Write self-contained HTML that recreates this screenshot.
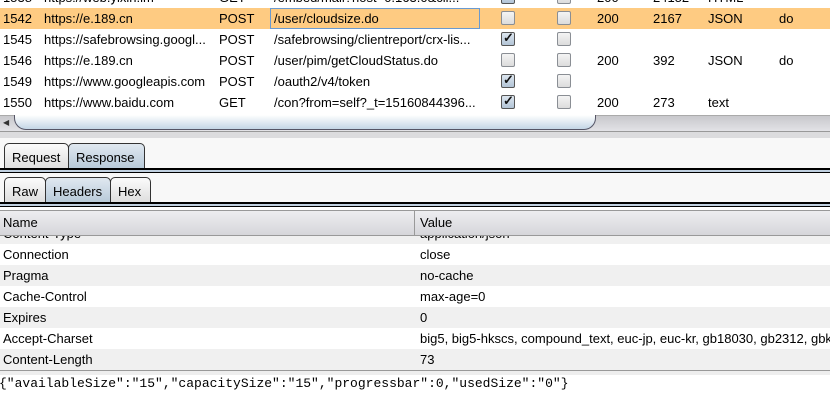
<!DOCTYPE html>
<html><head><meta charset="utf-8"><style>
body{margin:0;width:830px;height:401px;overflow:hidden;background:#fff;font-family:"Liberation Sans",sans-serif;font-size:13px;color:#000;position:relative}
.a{position:absolute;white-space:nowrap}
.row{position:absolute;left:0;width:830px;height:21px}
.row span{position:absolute;top:3px}
.cb{position:absolute;width:12px;height:12px;border:1px solid #8a8e94;border-radius:2px;background:linear-gradient(#f4f4f4,#dcdcdc);top:3px}
.cb.c{background:linear-gradient(#dde6ef,#b2c4d6);border-color:#555}
.cb.c::after{content:"✓";position:absolute;left:1px;top:-3px;font-size:13px;font-weight:bold;color:#111}
.tab{position:absolute;height:25px;border:1px solid #333;border-bottom:none;border-radius:5px 5px 0 0;background:linear-gradient(#fbfbfb,#dedede);box-sizing:border-box;padding:6px 0 0 7px}
.tab.s{background:linear-gradient(#e0e8f0,#b8cad9)}
.hr{position:absolute;left:0;width:830px;height:21px}
.hr span{position:absolute;top:3px}
</style></head><body>
<div class="row" style="top:-13px"><span style="left:3px">1538</span><span style="left:44px">https://web.yixin.im</span><span style="left:219px">GET</span><span style="left:274px">/embed/mail?host=0.163.0&amp;cli...</span><div class="cb c" style="left:501px"></div><div class="cb" style="left:557px"></div><span style="left:597px">200</span><span style="left:653px">24152</span><span style="left:708px">HTML</span></div>
<div class="row" style="top:8px;background:#fecb82"><span style="left:3px">1542</span><span style="left:44px">https://e.189.cn</span><span style="left:219px">POST</span><div class="a" style="left:270px;top:0;width:208px;height:19px;border:1px solid #6a9ad0"></div><span style="left:274px">/user/cloudsize.do</span><div class="cb" style="left:501px"></div><div class="cb" style="left:557px"></div><span style="left:597px">200</span><span style="left:653px">2167</span><span style="left:708px">JSON</span><span style="left:779px">do</span></div>
<div class="row" style="top:29px"><span style="left:3px">1545</span><span style="left:44px">https://safebrowsing.googl...</span><span style="left:219px">POST</span><span style="left:274px">/safebrowsing/clientreport/crx-lis...</span><div class="cb c" style="left:501px"></div><div class="cb" style="left:557px"></div></div>
<div class="row" style="top:50px"><span style="left:3px">1546</span><span style="left:44px">https://e.189.cn</span><span style="left:219px">POST</span><span style="left:274px">/user/pim/getCloudStatus.do</span><div class="cb" style="left:501px"></div><div class="cb" style="left:557px"></div><span style="left:597px">200</span><span style="left:653px">392</span><span style="left:708px">JSON</span><span style="left:779px">do</span></div>
<div class="row" style="top:71px"><span style="left:3px">1549</span><span style="left:44px">https://www.googleapis.com</span><span style="left:219px">POST</span><span style="left:274px">/oauth2/v4/token</span><div class="cb c" style="left:501px"></div><div class="cb" style="left:557px"></div></div>
<div class="row" style="top:92px"><span style="left:3px">1550</span><span style="left:44px">https://www.baidu.com</span><span style="left:219px">GET</span><span style="left:274px">/con?from=self?_t=15160844396...</span><div class="cb c" style="left:501px"></div><div class="cb" style="left:557px"></div><span style="left:597px">200</span><span style="left:653px">273</span><span style="left:708px">text</span></div>
<div class="a" style="left:0;top:115px;width:830px;height:16px;background:linear-gradient(#c8c8cc,#e4e4e8);border-top:1px solid #aaa"></div>
<div class="a" style="left:3px;top:118px;font-size:8px;color:#333">◀</div>
<div class="a" style="left:14px;top:115px;width:580px;height:14px;border:1px solid #556;border-top:none;border-radius:0 0 12px 12px;background:linear-gradient(#fff,#c4d6e6)"></div>
<div class="a" style="left:0;top:131px;width:830px;height:7px;background:#dcdcde;border-top:1px solid #999"></div>
<div class="a" style="left:0;top:138px;width:830px;height:31px;background:#f8f8f8"></div>
<div class="tab" style="left:4px;top:143px;width:65px">Request</div>
<div class="tab s" style="left:68px;top:143px;width:77px">Response</div>
<div class="a" style="left:0;top:168px;width:830px;height:2px;background:#000"></div>
<div class="a" style="left:0;top:170px;width:830px;height:2px;background:#c0d0e0;border-bottom:1px solid #000"></div>
<div class="a" style="left:0;top:173px;width:830px;height:29px;background:#f8f8f8"></div>
<div class="tab" style="left:4px;top:177px;width:42px">Raw</div>
<div class="tab s" style="left:45px;top:177px;width:66px">Headers</div>
<div class="tab" style="left:110px;top:177px;width:41px">Hex</div>
<div class="a" style="left:0;top:202px;width:830px;height:2px;background:#000"></div>
<div class="a" style="left:0;top:204px;width:830px;height:2px;background:#c0d0e0;border-bottom:1px solid #000"></div>
<div class="a" style="left:0;top:210px;width:830px;height:24px;background:linear-gradient(#eeeef0,#d6d6da);border-top:1px solid #999;border-bottom:1px solid #999"></div>
<div class="a" style="left:414px;top:211px;width:1px;height:24px;background:#999"></div>
<div class="a" style="left:3px;top:215px">Name</div>
<div class="a" style="left:420px;top:215px">Value</div>
<div class="a" style="left:0;top:236px;width:830px;height:134px;overflow:hidden">
<div class="hr" style="top:-13px;background:#f0f0f0"><span style="left:3px">Content-Type</span><span style="left:420px">application/json</span></div>
<div class="hr" style="top:8px"><span style="left:3px">Connection</span><span style="left:420px">close</span></div>
<div class="hr" style="top:29px;background:#f0f0f0"><span style="left:3px">Pragma</span><span style="left:420px">no-cache</span></div>
<div class="hr" style="top:50px"><span style="left:3px">Cache-Control</span><span style="left:420px">max-age=0</span></div>
<div class="hr" style="top:71px;background:#f0f0f0"><span style="left:3px">Expires</span><span style="left:420px">0</span></div>
<div class="hr" style="top:92px"><span style="left:3px">Accept-Charset</span><span style="left:420px">big5, big5-hkscs, compound_text, euc-jp, euc-kr, gb18030, gb2312, gbk</span></div>
<div class="hr" style="top:113px;background:#f0f0f0"><span style="left:3px">Content-Length</span><span style="left:420px">73</span></div>
</div>
<div class="a" style="left:0;top:370px;width:830px;height:1px;background:#999"></div>
<div class="a" style="left:0;top:371px;width:830px;height:4px;background:#eee"></div>
<div class="a" style="left:-1px;top:376px;font-family:'Liberation Mono',monospace;font-size:13px">{"availableSize":"15","capacitySize":"15","progressbar":0,"usedSize":"0"}</div>
</body></html>
